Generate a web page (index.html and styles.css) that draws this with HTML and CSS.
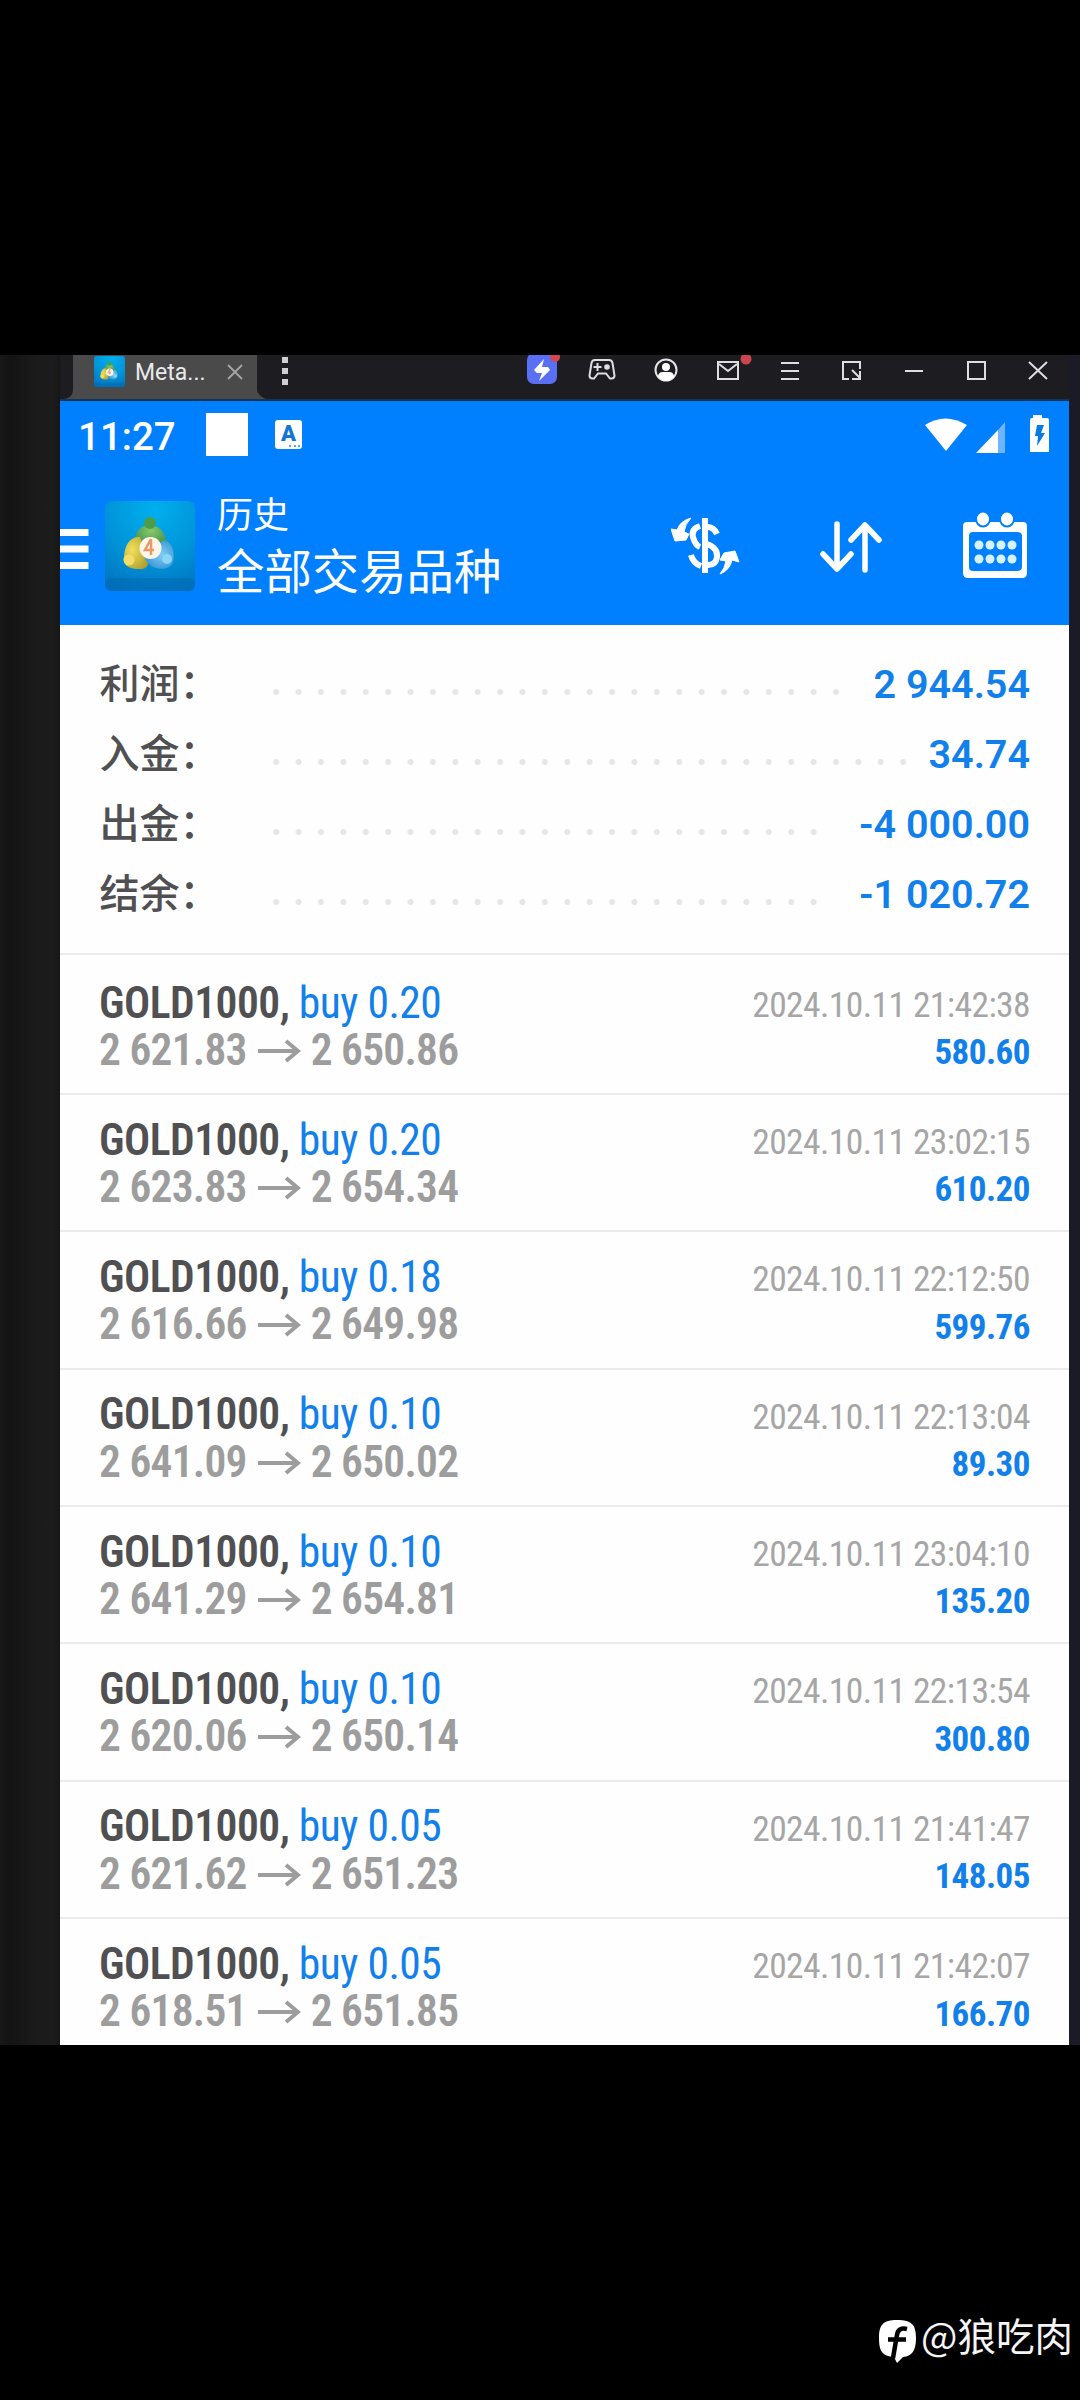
FILE: index.html
```
<!DOCTYPE html>
<html lang="zh-CN">
<head>
<meta charset="utf-8">
<title>历史 - 全部交易品种</title>
<link rel="stylesheet" href="styles.css">
</head>
<body>
<svg width="0" height="0" class="defs">
  <defs>
    <radialGradient id="sky" cx=".55" cy=".1" r="1"><stop offset="0" stop-color="#00b0ee"/><stop offset=".55" stop-color="#0093d8"/><stop offset="1" stop-color="#0072bd"/></radialGradient>
    <radialGradient id="green" cx=".5" cy=".2" r=".8"><stop offset="0" stop-color="#8ac86a"/><stop offset="1" stop-color="#2a8148"/></radialGradient>
    <radialGradient id="gold" cx=".35" cy=".4" r=".8"><stop offset="0" stop-color="#f0e05a"/><stop offset="1" stop-color="#a99a2c"/></radialGradient>
    <radialGradient id="aqua" cx=".6" cy=".5" r=".8"><stop offset="0" stop-color="#7fcdf6"/><stop offset="1" stop-color="#1b7fc4"/></radialGradient>
    <symbol id="logo" viewBox="0 0 90 90">
      <rect width="90" height="90" rx="7" fill="url(#sky)"/>
      <rect y="77" width="90" height="13" rx="6" fill="#0069b4" opacity=".55"/>
      <path d="M30 43C29 30 36 24 45 24s17 8 17 22L46 52z" fill="url(#green)"/>
      <circle cx="45" cy="22" r="6" fill="#4c9d4b"/>
      <path d="M35 36c-9-1-15 7-16 19-2 9 5 13 14 13 9 1 12-4 9-11z" fill="url(#gold)"/>
      <circle cx="24" cy="59" r="5.500" fill="#f3dc68"/>
      <path d="M60 39c8 4 10 13 8 22-3 8-13 8-20 5-5-3-9-8-10-14z" fill="url(#aqua)"/>
      <circle cx="62" cy="58" r="5" fill="#8ad5f8"/>
      <circle cx="45.500" cy="47" r="11" fill="#fbf5ea"/>
      <path d="M46 38l-6 11h9M46 38v16" fill="none" stroke="#e99a68" stroke-width="2.500"/>
    </symbol>
  </defs>
</svg>
<main class="capture">
  <div class="edge-left"></div>
  <div class="window">
    <header class="titlebar">
      <svg class="tab-shape" viewBox="0 0 205 44"><path d="M11 0H195V36Q198 42 204 44H3Q11 42 11 35z" fill="#4a4a4b"/></svg>
      <div class="tab">
        <svg class="tab-logo"><use href="#logo"/></svg>
        <span class="tab-name">Meta...</span>
        <svg class="tab-close" viewBox="0 0 16 16"><path d="M1 1l14 14M15 1L1 15" stroke="#a6a6a8" stroke-width="1.800"/></svg>
      </div>
      <svg class="kebab" viewBox="0 0 6 28"><path d="M0 0h6v6H0zM0 11h6v6H0zM0 22h6v6H0z" fill="#cfcfd1"/></svg>
      <div class="tools">
        <svg viewBox="0 0 62 46"><rect x="16" y="-2" width="30" height="31" rx="7" fill="#5a70f4"/><circle cx="44" cy="2" r="5" fill="#d24650"/><path d="M33 4L23 15l3 3h5l-3 8L39 15l-2-3h-6z" fill="#fff"/></svg>
        <svg viewBox="0 0 62 46"><g transform="translate(-2 0)" fill="none" stroke="#dedee2" stroke-width="2"><path d="M24 5h14q3 0 3.500 3l2 12.500q0 3-3 3h-1.500l-4-5h-8l-4 5h-1.500q-3 0-3-3L20.500 8q.5-3 3.500-3z"/><path d="M26.500 8v8M22.500 12h8"/><circle cx="36" cy="12" r="2.800" fill="#dedee2" stroke="none"/></g></svg>
        <svg viewBox="0 0 62 46"><circle cx="31" cy="15" r="10.500" fill="none" stroke="#e4e4e8" stroke-width="2"/><circle cx="31" cy="12" r="4" fill="#fff"/><path d="M23 22q0-5 5-5h6q5 0 5 5-4 4-8 4t-8-4z" fill="#fff"/></svg>
        <svg viewBox="0 0 62 46"><rect x="21" y="7" width="20" height="17" fill="none" stroke="#dedee2" stroke-width="2"/><path d="M22 9l9 7 9-7" fill="none" stroke="#dedee2" stroke-width="2"/><circle cx="49" cy="4" r="5.500" fill="#cc4450"/></svg>
        <svg viewBox="0 0 62 46"><path d="M22 8h18M22 16h18M22 24h18" stroke="#dedee2" stroke-width="2"/></svg>
        <svg viewBox="0 0 62 46"><path d="M39 14V7H22v17h6M31 15l8 8M39 16v8h-8" fill="none" stroke="#dedee2" stroke-width="2"/></svg>
        <svg viewBox="0 0 62 46"><path d="M22 16h18" stroke="#dedee2" stroke-width="2"/></svg>
        <svg viewBox="0 0 62 46"><rect x="23" y="7" width="17" height="17" fill="none" stroke="#dedee2" stroke-width="2"/></svg>
        <svg viewBox="0 0 62 46"><path d="M22 7l18 17M40 7L22 24" stroke="#dedee2" stroke-width="2"/></svg>
      </div>
    </header>
    <section class="statusbar">
      <time class="clock">11:27</time>
      <span class="square"></span>
      <span class="keyboard">A<i></i></span>
      <svg class="signals" viewBox="0 0 128 44">
        <path d="M1 12Q21-1 43 12L22 38z" fill="#fff"/>
        <path d="M81 9V40H54z" fill="#6db5ff"/><path d="M74 17V40H52z" fill="#fff"/>
        <path d="M109 5V2h9v3h5q2 0 2 2v32h-19V7q0-2 2-2z" fill="#fff"/><path d="M113 12h7l-3 8h4l-8 13 1-10h-3z" fill="#087be2"/>
      </svg>
    </section>
    <section class="appbar">
      <svg class="menu" viewBox="0 0 29 42"><path d="M0 4.500h28.500M0 21h28.500M0 37.500h28.500" stroke="#fff" stroke-width="7"/></svg>
      <svg class="logo"><use href="#logo"/></svg>
      <div class="titles"><h2>历史</h2><h1>全部交易品种</h1></div>
      <svg class="act-money" viewBox="0 0 70 60" fill="none" stroke="#fff">
        <path d="M34 2V57" stroke-width="6"/>
        <path d="M46 18Q43 11 36 11M29 10Q20 13 22 21T29 31" stroke-width="6"/>
        <path d="M36 28Q47 32 46 41T35 49M20 39Q22 47 30 50" stroke-width="6"/>
        <path d="M20 2Q9 5 6 14L0 13 4 25 15 24 18 18 13 16Q14 8 20 2z" fill="#fff" stroke="#fff" stroke-width="1"/>
        <path d="M49 58Q59 54 61 44L68 46 64 35 53 37 49 44 55 45Q54 52 49 58z" fill="#fff" stroke="#fff" stroke-width="1"/>
      </svg>
      <svg class="act-sort" viewBox="0 0 64 54" fill="none" stroke="#fff" stroke-width="5.500" stroke-linecap="round" stroke-linejoin="round"><path d="M18 4V48M4 34l14 15 14-15M46 50V6M32 20L46 5l14 15"/></svg>
      <svg class="act-calendar" viewBox="0 0 66 66">
        <path fill-rule="evenodd" d="M5 10H61Q65 10 65 14V61Q65 66 60 66H6Q1 66 1 61V14Q1 10 5 10zM11 20Q7 20 7 24V55Q7 59 11 59H55Q60 59 60 55V24Q60 20 55 20z" fill="#fff"/>
        <g fill="#fff" stroke="#0080ff" stroke-width="2"><ellipse cx="21" cy="7" rx="7" ry="7.500"/><ellipse cx="45" cy="7" rx="7" ry="7.500"/></g>
        <g fill="#d6f1ff"><circle cx="17" cy="33" r="4.500"/><circle cx="28" cy="33" r="4.500"/><circle cx="39" cy="33" r="4.500"/><circle cx="50" cy="33" r="4.500"/><circle cx="17" cy="47" r="4.500"/><circle cx="28" cy="47" r="4.500"/><circle cx="39" cy="47" r="4.500"/><circle cx="50" cy="47" r="4.500"/></g>
      </svg>
    </section>
    <section class="summary">
      <div class="line"><b>利润：</b><span class="dots" style="width:582px"></span><strong>2 944.54</strong></div>
      <div class="line"><b>入金：</b><span class="dots" style="width:649px"></span><strong>34.74</strong></div>
      <div class="line"><b>出金：</b><span class="dots" style="width:560px"></span><strong>-4 000.00</strong></div>
      <div class="line"><b>结余：</b><span class="dots" style="width:560px"></span><strong>-1 020.72</strong></div>
    </section>
    <section class="deals">
      <article class="deal"><div><p class="symbol"><b>GOLD1000,</b> buy 0.20</p><p class="price">2 621.83<svg class="arrow" viewBox="0 0 43 24"><path d="M0 12H40M28 2l12 10-12 10"/></svg>2 650.86</p></div><div class="result"><p class="date">2024.10.11 21:42:38</p><p class="profit">580.60</p></div></article>
      <article class="deal"><div><p class="symbol"><b>GOLD1000,</b> buy 0.20</p><p class="price">2 623.83<svg class="arrow" viewBox="0 0 43 24"><path d="M0 12H40M28 2l12 10-12 10"/></svg>2 654.34</p></div><div class="result"><p class="date">2024.10.11 23:02:15</p><p class="profit">610.20</p></div></article>
      <article class="deal"><div><p class="symbol"><b>GOLD1000,</b> buy 0.18</p><p class="price">2 616.66<svg class="arrow" viewBox="0 0 43 24"><path d="M0 12H40M28 2l12 10-12 10"/></svg>2 649.98</p></div><div class="result"><p class="date">2024.10.11 22:12:50</p><p class="profit">599.76</p></div></article>
      <article class="deal"><div><p class="symbol"><b>GOLD1000,</b> buy 0.10</p><p class="price">2 641.09<svg class="arrow" viewBox="0 0 43 24"><path d="M0 12H40M28 2l12 10-12 10"/></svg>2 650.02</p></div><div class="result"><p class="date">2024.10.11 22:13:04</p><p class="profit">89.30</p></div></article>
      <article class="deal"><div><p class="symbol"><b>GOLD1000,</b> buy 0.10</p><p class="price">2 641.29<svg class="arrow" viewBox="0 0 43 24"><path d="M0 12H40M28 2l12 10-12 10"/></svg>2 654.81</p></div><div class="result"><p class="date">2024.10.11 23:04:10</p><p class="profit">135.20</p></div></article>
      <article class="deal"><div><p class="symbol"><b>GOLD1000,</b> buy 0.10</p><p class="price">2 620.06<svg class="arrow" viewBox="0 0 43 24"><path d="M0 12H40M28 2l12 10-12 10"/></svg>2 650.14</p></div><div class="result"><p class="date">2024.10.11 22:13:54</p><p class="profit">300.80</p></div></article>
      <article class="deal"><div><p class="symbol"><b>GOLD1000,</b> buy 0.05</p><p class="price">2 621.62<svg class="arrow" viewBox="0 0 43 24"><path d="M0 12H40M28 2l12 10-12 10"/></svg>2 651.23</p></div><div class="result"><p class="date">2024.10.11 21:41:47</p><p class="profit">148.05</p></div></article>
      <article class="deal"><div><p class="symbol"><b>GOLD1000,</b> buy 0.05</p><p class="price">2 618.51<svg class="arrow" viewBox="0 0 43 24"><path d="M0 12H40M28 2l12 10-12 10"/></svg>2 651.85</p></div><div class="result"><p class="date">2024.10.11 21:42:07</p><p class="profit">166.70</p></div></article>
    </section>
  </div>
  <div class="edge-right"></div>
</main>
<footer class="watermark">
  <svg class="mark" viewBox="0 0 37 43"><path d="M18 0C33 0 37 5 37 18S33 36 24 37L18 43 15 37C3 36 0 31 0 18S4 0 18 0z" fill="#fff"/><path d="M28 9Q19 7 18 15L14 38M9 19.500H27" fill="none" stroke="#000" stroke-width="4.500"/></svg>
  <span>@狼吃肉</span>
</footer>
</body>
</html>
```
FILE: styles.css
```
* { box-sizing: border-box; }
body {
  margin: 0;
  height: 2400px;
  display: flex;
  flex-direction: column;
  background: #000;
  padding-top: 355px;
  font-family: Roboto, "Noto Sans CJK SC", sans-serif;
  overflow: hidden;
}
h1, h2, p { margin: 0; }
svg { flex: none; display: block; }
.defs { position: absolute; }

.capture { display: flex; height: 1690px; overflow: hidden; }
.edge-left { width: 60px; background: linear-gradient(90deg, #171717, #131313 18%, #1b1b1b 60%, #1c1c1c 90%, #161616); }
.edge-right { width: 11px; background: #1b1b27; }
.window { width: 1009px; background: #fefefe; }

.titlebar {
  position: relative;
  display: flex;
  height: 46px;
  background: #1c1c21;
  border-bottom: 2px solid #153456;
}
.tab-shape { position: absolute; left: 2px; top: 0; width: 205px; height: 44px; }
.tab { position: relative; display: flex; width: 197px; padding-left: 34px; }
.tab-logo { width: 31px; height: 31px; margin-top: 1px; }
.tab-name { width: 92px; padding-left: 10px; font-size: 23px; line-height: 36px; color: #e9e9ea; }
.tab-close { width: 16px; height: 16px; margin: 9px 0 0 10px; }
.kebab { width: 6px; height: 28px; margin: 2px 0 0 25px; }
.tools { display: flex; margin-left: auto; }
.tools svg { width: 62px; height: 46px; }

.statusbar { display: flex; height: 64px; padding-left: 18px; background: #0080ff; }
.clock { width: 128px; font-size: 38.5px; font-weight: 500; line-height: 72px; color: #fff; }
.square { width: 42px; height: 43px; margin-top: 12px; background: #fff; }
.keyboard {
  position: relative;
  width: 27px;
  height: 29px;
  margin: 19px 0 0 27px;
  border-radius: 3px;
  background: #fff;
  color: #1476d4;
  font-size: 22px;
  font-weight: 900;
  line-height: 28px;
  text-align: center;
}
.keyboard i { position: absolute; right: 2px; bottom: 2px; width: 11px; border-bottom: 2px dotted #5aa9e8; }
.signals { width: 128px; height: 44px; margin: 12px 17px 0 auto; }

.appbar { display: flex; height: 160px; background: #0080ff; color: #fff; }
.menu { width: 29px; height: 42px; margin-top: 63px; }
.logo { width: 90px; height: 90px; margin: 36px 0 0 16px; }
.titles { width: 454px; margin: 24px 0 0 22px; }
.titles h2 { font-size: 36px; font-weight: 400; line-height: 54px; }
.titles h1 { font-size: 47.4px; font-weight: 400; line-height: 60.5px; }
.act-money { width: 70px; height: 60px; margin-top: 51px; }
.act-sort { width: 64px; height: 54px; margin: 55px 0 0 78px; }
.act-calendar { width: 66px; height: 66px; margin: 47px 0 0 79px; }

.summary { height: 328px; padding: 24.5px 38px 0; }
.line { display: flex; align-items: baseline; height: 70px; line-height: 70px; font-size: 40px; }
.line b { width: 166px; padding-left: 1.5px; font-weight: 500; color: #505052; }
.dots {
  height: 6px;
  margin-left: .5px;
  transform: translateY(-3px);
  background: radial-gradient(circle at center, #e6e6e6 2.6px, transparent 3.4px) 0 0 / 22.4px 6px;
}
.line strong { margin: 0 1px 0 auto; font-size: 39.5px; font-weight: 600; color: #1280ea; }

.deals { font-family: "Roboto Condensed", Roboto, sans-serif; }
.deal {
  display: flex;
  justify-content: space-between;
  height: 137.36px;
  padding: 21.5px 39px 0 39px;
  border-top: 2.5px solid #ebebeb;
  line-height: 47.5px;
  white-space: nowrap;
}
.deal:first-child { height: 140px; padding-top: 24.5px; }
.symbol { font-size: 43.5px; letter-spacing: -.5px; color: #1280ea; }
.symbol b { font-weight: 600; color: #505052; }
.price { display: flex; font-size: 43.5px; font-weight: 600; letter-spacing: -.75px; color: #9d9d9d; }
.arrow { width: 43px; height: 24px; margin: 12px 10px 0 11px; fill: none; stroke: #9d9d9d; stroke-width: 4; }
.result { padding-top: 2.4px; text-align: right; }
.date { font-size: 35.5px; letter-spacing: -.58px; color: #a6a6a6; }
.profit { font-size: 35px; font-weight: 700; letter-spacing: -.5px; color: #1280ea; }

.watermark { display: flex; margin: 275px 0 0 879px; color: #f5f5f5; font-size: 38.5px; line-height: 50px; }
.watermark span { margin-left: 5px; margin-top: -11px; font-family: "Noto Sans CJK SC", sans-serif; white-space: nowrap; }
.mark { width: 37px; height: 43px; }
```
